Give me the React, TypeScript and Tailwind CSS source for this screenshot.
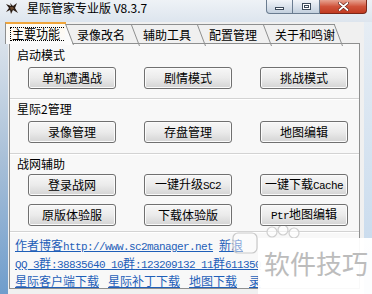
import { ReactNode } from 'react';

const cjk = "font-['Noto_Sans_CJK_SC','Liberation_Sans',sans-serif]";

// ascii text in the narrow monospace look of the original
function A({ children }: { children: ReactNode }) {
  return <span className="font-['Liberation_Mono',monospace] text-[11px] tracking-[-0.6px]">{children}</span>;
}

function Btn({ children }: { children: ReactNode }) {
  return (
    <button className="flex h-[22px] w-[88px] items-center justify-center rounded-[3px] border border-[#707070] bg-linear-to-b from-[#f7f7f7] via-[#ebebeb] to-[#d4d4d4] text-[12px] leading-none text-black shadow-[inset_0_0_0_1px_#fbfbfb]">
      <span className="leading-[14px]">{children}</span>
    </button>
  );
}

function Slant({ fill }: { fill?: boolean }) {
  return (
    <svg className="absolute left-full top-0 h-[21px] w-[9px] -ml-[1px]" viewBox="0 0 9 21">
      {fill && <polygon points="0,0 8,21 0,21" fill="#fbfbfb" />}
      <line x1="0.5" y1="0" x2="8.5" y2="21" stroke="#8e8f8f" strokeWidth="1" />
    </svg>
  );
}

function Tab({ label, wide }: { label: string; wide?: boolean }) {
  return (
    <div className={wide ? 'relative mt-[2px] h-[19px] w-[71px] border-t border-[#8e8f8f] pl-[11px]' : 'relative mt-[2px] h-[19px] w-[66px] border-t border-[#8e8f8f] pl-[11px]'}>
      <span className="block pt-[3px] text-[12px] leading-[14px]">{label}</span>
      <Slant />
    </div>
  );
}

function Section({ label }: { label: string }) {
  return <div className="pl-[7px] text-[12px] leading-[14px] text-black">{label}</div>;
}

function Sep() {
  return <div className="h-[2px] border-t border-b border-t-[#d3d3d3] border-b-white" />;
}

export default function App() {
  return (
    <div className={`relative h-[294px] w-[372px] overflow-hidden bg-[#f0f0f0] ${cjk}`}>
      {/* title bar */}
      <div className="flex h-[22px] items-start bg-linear-to-b from-[#eef2f6] to-[#dde5ee]">
        <svg className="ml-[6px] mt-[3px] h-[11px] w-[12px]" viewBox="0 0 12 11">
          <polygon points="0,1 5,3 4,0 7,3 11,0 9,5 12,10 7,7 5,11 4,7 0,9 3,5" fill="#2b1d14" />
          <polygon points="4,4 7,4 8,6 5,7" fill="#6b4a2c" />
        </svg>
        <span className="ml-[9px] pt-[1px] text-[12px] leading-[14px] text-black">星际管家专业版 V8.3.7</span>
        <div className="ml-auto mr-[5px] flex">
          <div className="flex h-[14px] w-[27px] items-end justify-center rounded-bl-[4px] border border-t-0 border-[#6a7c90] bg-linear-to-b from-[#f2f5f9] to-[#c3d0de] pb-[3px]">
            <div className="h-[3px] w-[9px] border border-[#3c4a5a] bg-white" />
          </div>
          <div className="flex h-[14px] w-[27px] items-center justify-center border-b border-r border-[#6a7c90] bg-linear-to-b from-[#f2f5f9] to-[#c3d0de]">
            <div className="h-[7px] w-[9px] border border-[#3c4a5a] bg-white p-[1px]">
              <div className="h-full w-full border border-[#3c4a5a]" />
            </div>
          </div>
          <div className="flex h-[14px] w-[47px] items-center justify-center rounded-br-[4px] border border-l-0 border-t-0 border-[#7a2618] bg-linear-to-b from-[#e6a291] via-[#d0533b] to-[#c13a20]">
            <svg className="h-[9px] w-[11px]" viewBox="0 0 11 9">
              <path d="M1.5 1 L9.5 8 M9.5 1 L1.5 8" stroke="#5a1a10" strokeWidth="3" strokeLinecap="round" />
              <path d="M1.5 1 L9.5 8 M9.5 1 L1.5 8" stroke="#ffffff" strokeWidth="1.8" strokeLinecap="round" />
            </svg>
          </div>
        </div>
      </div>

      <div className="flex h-[272px]">
        {/* left frame */}
        <div className="w-[8px] bg-linear-to-b from-[#e2e8ee] via-[#a9c0d8] to-[#6f9dcc]" />

        {/* client */}
        <div className="flex w-[356px] flex-col">
          <div className="-ml-[3px] flex h-[21px]">
            <div className="relative z-10 h-[22px] w-[61px] border-l border-t-2 border-l-[#8e8f8f] border-t-[#f0a53a] bg-linear-to-b from-[#fffaf0] to-[#fbfbfb] pl-[4px]">
              <span className="mt-[3px] block border border-dotted border-black px-[1px] text-[12px] leading-[12px]">主要功能</span>
              <Slant fill />
            </div>
            <Tab label="录像改名" />
            <Tab label="辅助工具" />
            <Tab label="配置管理" />
            <Tab label="关于和鸣谢" wide />
          </div>

          <div className="ml-[1px] h-[246px] w-[351px] border border-[#8e8f8f] bg-[#f8f8f8] text-black">
            <div className="pt-[4px]">
              <Section label="启动模式" />
              <div className="mt-[5px] grid grid-cols-[88px_88px_88px] gap-x-[28px] pl-[18px]">
                <Btn>单机遭遇战</Btn>
                <Btn>剧情模式</Btn>
                <Btn>挑战模式</Btn>
              </div>
            </div>
            <div className="mt-[9px]">
              <Sep />
            </div>

            <div className="mt-[2px]">
              <Section label="星际2管理" />
              <div className="mt-[5px] grid grid-cols-[88px_88px_88px] gap-x-[28px] pl-[18px]">
                <Btn>录像管理</Btn>
                <Btn>存盘管理</Btn>
                <Btn>地图编辑</Btn>
              </div>
            </div>
            <div className="mt-[10px]">
              <Sep />
            </div>

            <div className="mt-[2px]">
              <Section label="战网辅助" />
              <div className="mt-[3px] grid grid-cols-[88px_88px_88px] gap-x-[28px] gap-y-[8px] pl-[18px]">
                <Btn>登录战网</Btn>
                <Btn>
                  一键升级<A>SC2</A>
                </Btn>
                <Btn>
                  一键下载<A>Cache</A>
                </Btn>
                <Btn>原版体验服</Btn>
                <Btn>下载体验版</Btn>
                <Btn>
                  <A>Ptr</A>地图编辑
                </Btn>
              </div>
            </div>
            <div className="mt-[5px]">
              <Sep />
            </div>

            {/* links; what the watermark hides is left out */}
            <div className="whitespace-nowrap pl-[5px] pt-[4px] text-[12px] leading-[16px] text-[#1f5fb8]">
              <div className="flex gap-[6px]">
                <span className="underline">
                  作者博客<A>http://www.sc2manager.net</A>
                </span>
                <span className="underline">新浪</span>
              </div>
              <div>
                <span className="underline">
                  <A>QQ 3</A>群<A>:38835640 10</A>群<A>:123209132 11</A>群<A>611350</A>
                </span>
              </div>
              <div className="flex gap-[9px]">
                <span className="underline">星际客户端下载</span>
                <span className="underline">星际补丁下载</span>
                <span className="underline">地图下载</span>
                <span className="ml-[3px] underline">录</span>
              </div>
            </div>
          </div>
        </div>

        {/* right frame */}
        <div className="w-[8px] bg-linear-to-b from-[#e6edf4] to-[#c4d8ec]" />
      </div>

      {/* watermark over the screenshot */}
      <svg className="absolute left-[228px] top-[226px] h-[30px] w-[76px]" viewBox="0 0 76 30">
        <rect x="5" y="7" width="24" height="20" rx="5" fill="#ffffff" fillOpacity="0.45" stroke="#c9c9c9" strokeWidth="1.2" />
        <circle cx="44" cy="6" r="5" fill="#ffffff" fillOpacity="0.6" stroke="#cfcfcf" strokeWidth="1.2" />
        <circle cx="55" cy="4" r="5" fill="#ffffff" fillOpacity="0.6" stroke="#cfcfcf" strokeWidth="1.2" />
        <circle cx="66" cy="7" r="5" fill="#ffffff" fillOpacity="0.6" stroke="#cfcfcf" strokeWidth="1.2" />
      </svg>
      <div className="absolute bottom-0 left-[258px] right-0 top-[238px] bg-white/95">
        <span className="absolute left-[6px] top-[11px] text-[26px] leading-[28px] text-[#bcbcbc]">软件技巧</span>
      </div>
    </div>
  );
}
